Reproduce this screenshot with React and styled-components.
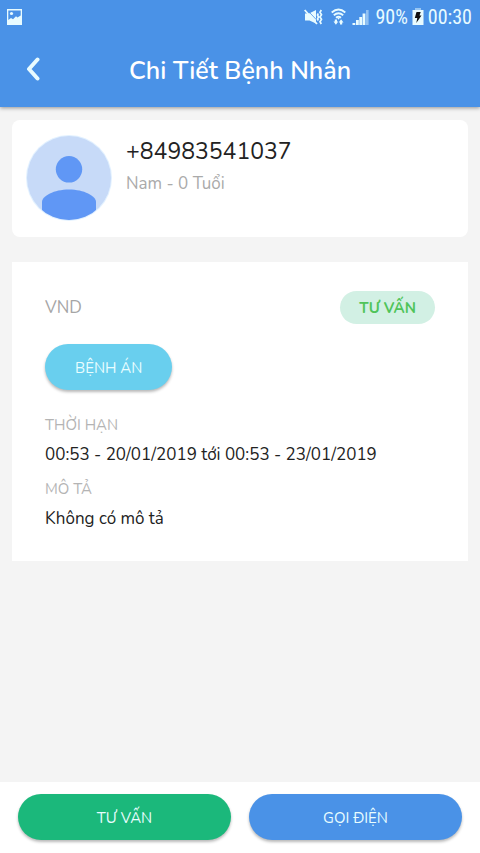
import React from "react";
import styled, { createGlobalStyle } from "styled-components";

const GlobalStyle = createGlobalStyle`
  * { box-sizing: border-box; }
  body {
    margin: 0;
    background: #f4f4f4;
    color: #222;
    font-family: "Nunito", "Noto Sans", sans-serif;
  }
  h1, h2, p, dl, dt, dd { margin: 0; font-weight: 400; }
  button { font-family: inherit; border: 0; cursor: pointer; }
  svg { display: block; flex: none; }
`;

const Screen = styled.div`
  display: flex;
  flex-direction: column;
  min-height: 100vh;
`;

const TopBar = styled.header`
  background: #4a92e7;
  color: #fff;
  box-shadow: 0 1px 4px rgba(0, 0, 0, 0.4);
`;

const StatusBar = styled.div`
  display: flex;
  align-items: center;
  justify-content: space-between;
  height: 33px;
  padding: 0 8px 0 6px;
  font-family: "Roboto Condensed", "Roboto", sans-serif;
  font-size: 20px;
  color: #e8fbff;
`;

const StatusGroup = styled.div`
  display: flex;
  align-items: center;
  gap: ${({ $gap }) => $gap};
`;

const NavBar = styled.div`
  display: grid;
  grid-template-columns: 66px 1fr 66px;
  align-items: center;
  height: 74px;
`;

const BackButton = styled.button`
  display: flex;
  justify-content: center;
  padding: 8px 8px 10px;
  background: none;
  color: #e8fbff;
`;

const Title = styled.h1`
  padding-top: 2px;
  font-size: 25px;
  line-height: 32px;
  font-weight: 600;
  text-align: center;
  white-space: nowrap;
`;

const Content = styled.main`
  flex: 1;
  display: flex;
  flex-direction: column;
  gap: 25px;
  padding: 13px 12px;
`;

const PatientCard = styled.section`
  display: flex;
  gap: 14px;
  padding: 15px 14px 16px;
  border-radius: 8px;
  background: #fff;
`;

const PatientInfo = styled.div`
  padding-top: 1px;
`;

const Phone = styled.h2`
  font-size: 23px;
  line-height: 32px;
`;

const Demographics = styled.p`
  font-size: 17px;
  line-height: 32px;
  color: #aaa;
`;

const DetailCard = styled.section`
  display: flex;
  flex-direction: column;
  align-items: flex-start;
  padding: 29px 33px 24px;
  background: #fff;
`;

const PriceRow = styled.div`
  display: flex;
  align-items: center;
  justify-content: space-between;
  width: 100%;
  font-size: 17px;
  line-height: 33px;
  color: #a5a5a5;
`;

const Badge = styled.span`
  padding: 1px 19px 0;
  border-radius: 17px;
  background: #d2f0e4;
  color: #50c45a;
  font-size: 15px;
  line-height: 32px;
  font-weight: 700;
`;

const PillButton = styled.button`
  height: 46px;
  padding: 2px 30px 0;
  border-radius: 23px;
  background: ${({ $color }) => $color};
  color: #e8fdff;
  font-size: 15px;
  box-shadow: 0 2px 3px rgba(0, 0, 0, 0.28);
`;

const RecordButton = styled(PillButton)`
  margin: 20px 0 19px;
`;

const Details = styled.dl`
  display: flex;
  flex-direction: column;
`;

const Label = styled.dt`
  font-size: 15px;
  line-height: 32px;
  color: #b4b4b4;
`;

const Value = styled.dd`
  font-size: 17px;
  line-height: 28px;
  padding-bottom: 4px;
`;

const ActionBar = styled.footer`
  display: grid;
  grid-template-columns: 1fr 1fr;
  gap: 18px;
  padding: 12px 18px 13px;
  background: #fff;
`;

const PictureIcon = () => (
  <svg width="17" height="16" viewBox="0 0 17 16">
    <path fill="currentColor" fillRule="evenodd" d="M1 0h15v16H1zM2.300 1.500v9.500L5 9l2 1.200 3-3 1.500 1.200 3.200-2V1.500z" />
    <circle cx="5.500" cy="4.500" r="1.600" fill="currentColor" />
  </svg>
);

const MuteVibrateIcon = () => (
  <svg width="19" height="16" viewBox="0 0 19 16">
    <path fill="currentColor" d="M1 4.500h4L12 1v13.500L5.500 11.500H1z" />
    <path d="M3 .8l9.500 10" stroke="#4a92e7" strokeWidth=".8" />
    <path d="M.7 1l12.300 14" stroke="currentColor" strokeWidth="1.800" />
    <path d="M14.300 4.500l-.8 1.500 1 2-1 2 .8 1.500M17.300 1l-1.300 2.300 1.500 2.400L16 8l1.500 2.300L16 12.700l1.300 2.300" fill="none" stroke="currentColor" strokeWidth="1.700" />
  </svg>
);

const WifiIcon = () => (
  <svg width="15" height="17" viewBox="0 0 15 17" fill="none" stroke="currentColor" strokeWidth="1.800">
    <path d="M.7 4.500Q7.500-1.500 14.300 4.500M2.800 7.200q4.700-4 9.400 0M5 9.700q2.500-2 5 0" />
    <path fill="currentColor" stroke="none" d="M6.300 10h2.400L7.500 11.800zM2.500 13.500h1.300v-2h2.200v2h1.300L4.900 16.800zM7.700 14.500l2.400-3.200 2.400 3.200h-1.300v2H9v-2z" />
  </svg>
);

const SignalIcon = () => (
  <svg width="17" height="16" viewBox="0 0 17 16" fill="currentColor">
    <path d="M.5 14h2.800v2H.5zM4 11h2.800v5H4zM7.300 8h2.800v8H7.300zM10.600 4.500h2.800V16h-2.800z" />
    <path opacity=".45" d="M14 1h2.600v15H14z" />
  </svg>
);

const BatteryIcon = () => (
  <svg width="12" height="17" viewBox="0 0 12 17">
    <path fill="currentColor" opacity=".5" d="M3 0h6v2H3z" />
    <path fill="currentColor" d="M.5 2h11v15H.5z" />
    <path fill="#111" d="M4.500 4h4.200L7.500 7.500h2L4.300 15l1-5H2.800z" />
  </svg>
);

const BackIcon = () => (
  <svg width="16" height="24" viewBox="0 0 16 24">
    <path d="M12.500 2.500L4 12l8.500 9.500" fill="none" stroke="currentColor" strokeWidth="4" strokeLinecap="round" strokeLinejoin="round" />
  </svg>
);

const Avatar = () => (
  <svg width="86" height="86" viewBox="0 0 86 86" role="img" aria-label="Ảnh đại diện">
    <defs>
      <clipPath id="avatar-clip"><circle cx="43" cy="43" r="42" /></clipPath>
    </defs>
    <circle cx="43" cy="43" r="43" fill="#e2f1ff" />
    <circle cx="43" cy="43" r="42" fill="#c7daf8" />
    <g fill="#6097f5" clipPath="url(#avatar-clip)">
      <circle cx="43" cy="34.300" r="13.200" />
      <path d="M16 86V67c0-6 12-12.500 27-12.500S70 61 70 67v19z" />
    </g>
  </svg>
);

export default function App() {
  return (
    <Screen>
      <GlobalStyle />
      <TopBar>
        <StatusBar>
          <PictureIcon />
          <StatusGroup $gap="6px">
            <StatusGroup $gap="8px">
              <MuteVibrateIcon />
              <WifiIcon />
            </StatusGroup>
            <SignalIcon />
            <StatusGroup $gap="4px">
              <span>90%</span>
              <BatteryIcon />
              <span>00:30</span>
            </StatusGroup>
          </StatusGroup>
        </StatusBar>
        <NavBar>
          <BackButton type="button" aria-label="Quay lại"><BackIcon /></BackButton>
          <Title>Chi Tiết Bệnh Nhân</Title>
        </NavBar>
      </TopBar>
      <Content>
        <PatientCard>
          <Avatar />
          <PatientInfo>
            <Phone>+84983541037</Phone>
            <Demographics>Nam - 0 Tuổi</Demographics>
          </PatientInfo>
        </PatientCard>
        <DetailCard>
          <PriceRow>
            <span>VND</span>
            <Badge>TƯ VẤN</Badge>
          </PriceRow>
          <RecordButton type="button" $color="#69cfee">BỆNH ÁN</RecordButton>
          <Details>
            <Label>THỜI HẠN</Label>
            <Value>00:53 - 20/01/2019 tới 00:53 - 23/01/2019</Value>
            <Label>MÔ TẢ</Label>
            <Value>Không có mô tả</Value>
          </Details>
        </DetailCard>
      </Content>
      <ActionBar>
        <PillButton type="button" $color="#1bb87b">TƯ VẤN</PillButton>
        <PillButton type="button" $color="#4a92e7">GỌI ĐIỆN</PillButton>
      </ActionBar>
    </Screen>
  );
}
